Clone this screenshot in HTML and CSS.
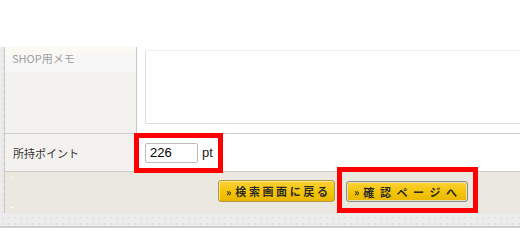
FILE: index.html
```html
<!DOCTYPE html>
<html lang="ja">
<head>
<meta charset="utf-8">
<title>SHOP</title>
<link rel="stylesheet" href="styles.css">
</head>
<body>
<div class="panel">
  <div class="sheet">
    <div class="row row-memo">
      <div class="label label-memo">SHOP用メモ</div>
      <div class="value value-memo"><div class="textarea"></div></div>
    </div>
    <div class="row row-point">
      <div class="label label-point">所持ポイント</div>
      <div class="value value-point">
        <div class="input">226</div><span class="unit">pt</span>
      </div>
    </div>
    <div class="footer">
      <span class="btn btn-back"><span class="raq">»</span>検索画面に戻る</span>
      <span class="btn btn-confirm"><span class="raq">»</span>確認ページへ</span>
    </div>
  </div>
</div>
<div class="mark mark-point"></div>
<div class="mark mark-confirm"></div>
</body>
</html>
```
FILE: styles.css
```css
html, body {
  margin: 0;
  padding: 0;
  background: #ffffff;
  overflow: hidden;
  font-family: "Noto Sans CJK JP", "Noto Sans", sans-serif;
}
.panel {
  margin-top: 47px;
  padding: 0 0 13px 4px;
  background-color: #ececec;
  background-image: radial-gradient(#e2e2e2 1px, transparent 1.2px);
  background-size: 6px 6px;
  border-bottom: 2px solid #cfcfcf;
  overflow: hidden;
}
.sheet {
  width: calc(100% + 60px);
  border-left: 1px solid #c9c9c9;
  background: #ffffff;
}
.row {
  display: grid;
  grid-template-columns: 132px 1fr;
  border-bottom: 1px solid #cccccc;
}
.label {
  border-right: 1px solid #c8c8c8;
  background: #f3f2ee;
  padding-left: 7px;
  font-size: 11px;
  line-height: 14px;
}
.label-memo {
  color: #a0a0a0;
  padding-top: 4px;
  background: linear-gradient(#fcfbf1 0, #f7f7f6 10px, #f6f6f7 24px, #f3f2ee 25px);
}
.label-point {
  color: #333333;
  display: flex;
  align-items: center;
  padding-left: 8px;
}
.value-memo {
  padding: 3px 8px 9px 8px;
}
.textarea {
  height: 72px;
  border: 1px solid #dcdce2;
  border-top-color: #eeeef2;
  border-radius: 2px;
}
.row-point {
  height: 37px;
}
.value-point {
  display: flex;
  align-items: center;
  padding-left: 8px;
}
.input {
  width: 47px;
  height: 18px;
  border: 1px solid #bdbdbd;
  border-radius: 2px;
  padding-left: 4px;
  font-family: "Liberation Sans", Arial, sans-serif;
  font-size: 13px;
  line-height: 18px;
  color: #000000;
  background: #ffffff;
}
.unit {
  margin-left: 4px;
  font-family: "Liberation Sans", Arial, sans-serif;
  font-size: 13px;
  color: #222222;
}
.footer {
  height: 41px;
  background:
    linear-gradient(#ffffff, #ffffff) no-repeat 6px 5px / 2px 1px,
    linear-gradient(#ffffff, #ffffff) no-repeat 6px 35px / 2px 1px,
    #ebe8e0;
  display: flex;
  align-items: flex-start;
  padding-left: 213px;
  padding-top: 8px;
  box-sizing: border-box;
  gap: 11px;
}
.btn {
  display: flex;
  align-items: center;
  height: 22px;
  box-sizing: border-box;
  border-radius: 3px;
  background: linear-gradient(#fbd23a, #f3c200 60%, #eab700);
  font-size: 11px;
  font-weight: bold;
  color: #2a2a2a;
  white-space: nowrap;
  overflow: hidden;
}
.raq {
  font-size: 10px;
  margin-right: 4px;
  letter-spacing: 0;
}
.btn-back {
  width: 117px;
  border: 1px solid #b19a45;
  box-shadow: inset 1px 1px 0 #fde58a;
  padding-left: 7px;
  letter-spacing: 2.6px;
}
.btn-confirm {
  width: 122px;
  margin-top: 1px;
  height: 21px;
  border: 1px solid #8d8d8d;
  box-shadow: inset 0 0 0 1px #e9dfb5;
  padding-left: 7px;
  letter-spacing: 5.6px;
}
.mark {
  position: absolute;
  border: 5px solid #ff0000;
  box-sizing: border-box;
}
.mark-point {
  left: 134px;
  top: 133px;
  width: 89px;
  height: 40px;
}
.mark-confirm {
  left: 337px;
  top: 167px;
  width: 141px;
  height: 46px;
}
```
